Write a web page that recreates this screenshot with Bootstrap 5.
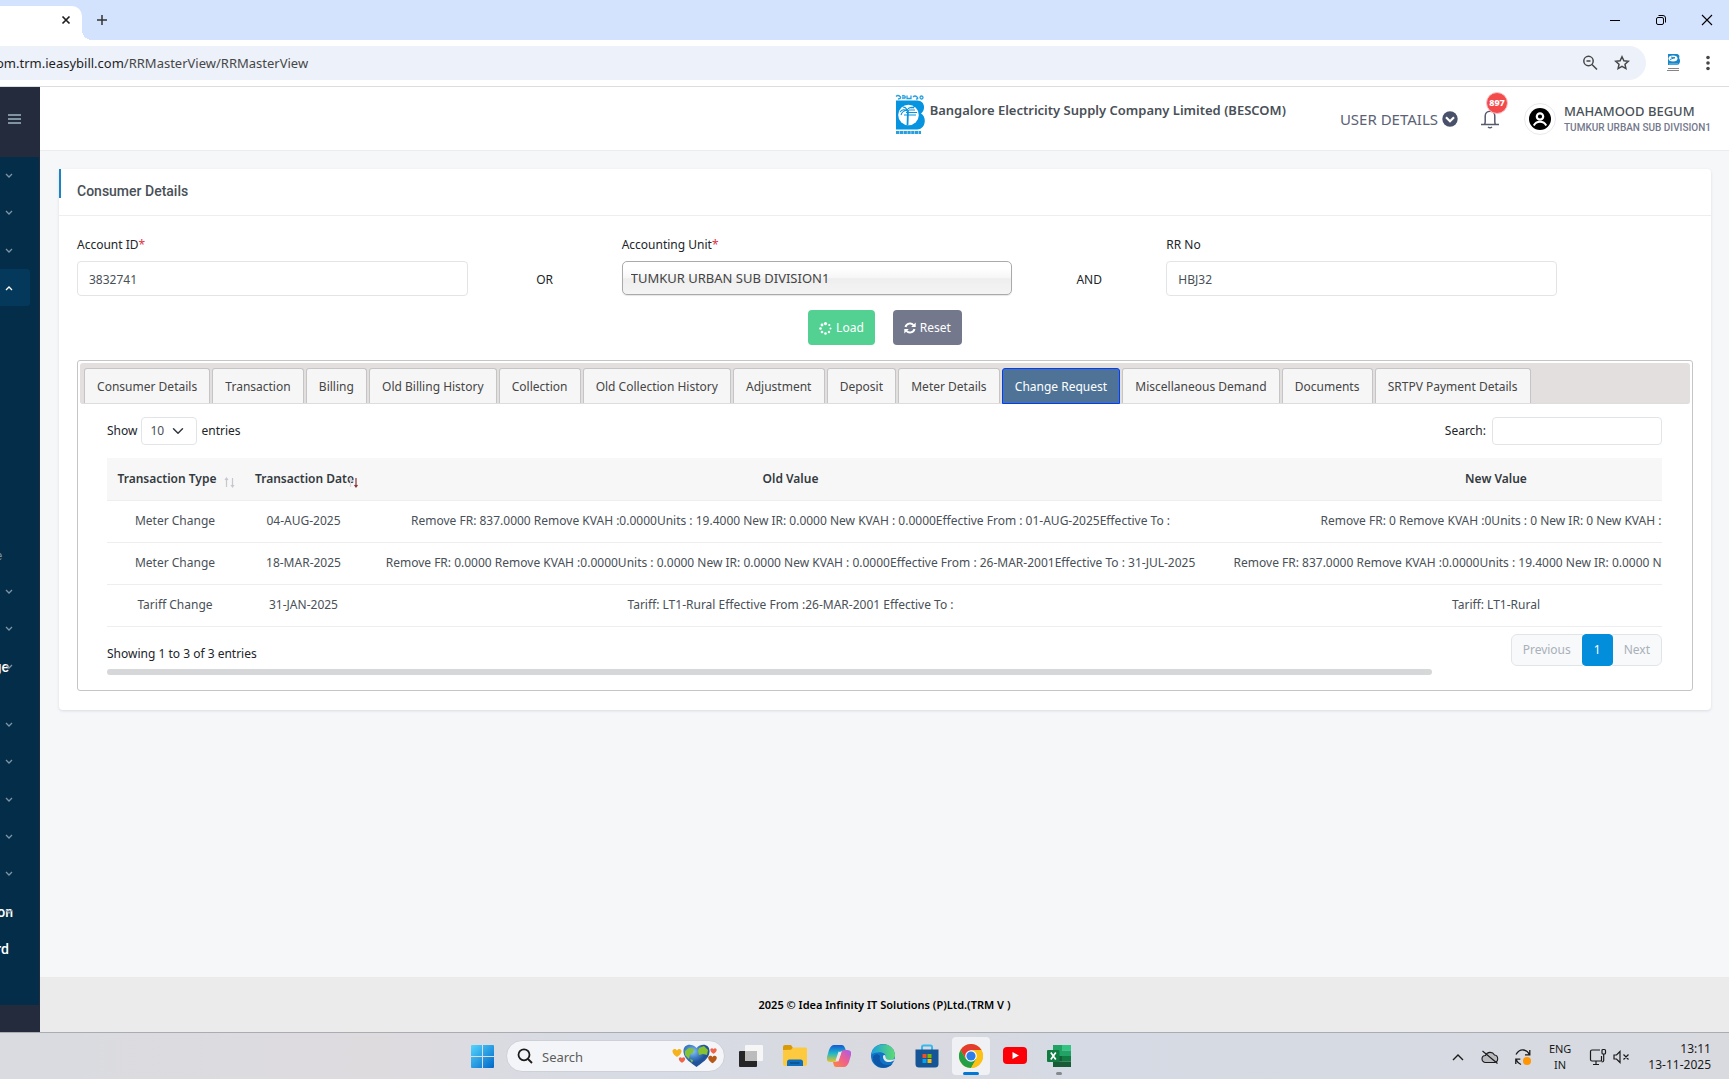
<!DOCTYPE html>
<html lang="en">
<head>
<meta charset="utf-8">
<meta name="viewport" content="width=device-width, initial-scale=1">
<title>RR Master View</title>
<link href="https://cdn.jsdelivr.net/npm/bootstrap@5.3.0/dist/css/bootstrap.min.css" rel="stylesheet">
<style>
body{font-family:"Noto Sans","Open Sans",sans-serif;font-size:12px;line-height:18px;color:#212529;background:#f6f7f9;min-height:100vh;overflow:hidden}
svg{display:block;flex:none}
button{font-family:inherit}
.icon-btn{border:0;background:none;padding:0;display:block}
/* browser chrome */
.tabstrip{height:40px;background:#d3e3fd}
.tab-open{width:82px;height:34px;background:#fff;border-radius:0 10px 0 0;padding:0 10px 6px 0}
.tab-foot{width:10px;height:10px;background:radial-gradient(circle at 100% 0,transparent 10px,#fff 10px)}
.new-tab{margin:0 0 14px 4px}
.restore{margin:0 34px}
.toolbar{height:47px;background:#fff;border-bottom:1px solid #dcdddf}
.omnibox{height:34px;background:#edf1fa;border-radius:0 17px 17px 0;font-size:13px;color:#1f1f1f;overflow:hidden}
.omnibox .url{margin-left:-4px}
.omnibox .path{color:#474747}
.site-app{margin:0 24px 0 18px}
.menu-dots{margin-right:18px}
/* sidebar */
.side{width:40px;background:#232b3c;font-family:Roboto,sans-serif}
.side-top{height:70px;padding:26px 0 0 8px}
.side-menu{background:#032d49;width:39px;height:848px;overflow:hidden}
.side-menu ul{list-style:none;margin:0;padding:0}
.side-menu li{height:37px;width:30px;display:grid;grid-template-columns:13px;align-items:center;justify-items:end}
.side-menu li>*{grid-area:1/1}
.side-menu li:nth-child(3n){margin-top:1px}
.side-menu svg{color:#7f95a5}
.side-menu .current{background:#04395b;border-radius:0 3px 3px 0}
.side-menu .current svg{color:#fff;transform:rotate(180deg)}
.side-menu .tall{margin-bottom:21px}
.side-menu .tall,.side-menu .last{grid-template-columns:9px}
.side-menu .tall svg{margin-right:-4px}
.side-menu a{color:#fff;font-size:14px;font-weight:500;text-decoration:none}
.side-menu .sub{height:267px;padding-top:241px;font-size:12px;color:#7f95a5;width:2px;display:flex;justify-content:flex-end}
/* header */
.top{height:64px;background:#fff;border-bottom:1px solid #ebecee;padding-right:18px}
.brand{margin-bottom:8px}
.company{font-size:13px;font-weight:600;color:#495057;margin:0 54px 18px 4px}
.userlink{font-size:15px;color:#5b6275;text-decoration:none}
.bell{position:relative;margin:0 25px 0 23px}
.count{position:absolute;left:5px;top:-17px;width:22px;height:22px;border-radius:11px;background:#f34b4b;border:1px solid #fbc4c4;color:#fff;font-size:9px;font-weight:800;line-height:20px;text-align:center}
.avatar{width:32px;height:32px;border:1px solid #e9eaee;border-radius:16px}
.who{margin:2px 0 0 8px;line-height:17px}
.who b{display:block;font-weight:500;font-size:13px;color:#495057}
.who span{display:block;font-family:Roboto,sans-serif;font-size:10px;font-weight:500;color:#74788d;line-height:16px}
/* card */
.page{padding:18px 18px 0 19px}
.panel{background:#fff;border:0;border-radius:4px;box-shadow:0 1px 3px rgba(40,60,90,.14)}
.panel-head{height:47px;border-bottom:1px solid #eceef0;position:relative;padding:0 18px 2px}
.panel-head::before{content:"";position:absolute;left:0;top:0;width:2px;height:29px;background:#1c84c6}
.panel-head h1{font:500 14px/20px Roboto,sans-serif;color:#495057;margin:0}
.panel-body{padding:20px 18px 19px}
.fields{--bs-gutter-x:18px}
.fields label{display:block;margin-bottom:7px}
.field{height:35px;border:1px solid #e2e5e8;border-radius:4px;padding:2px 11px 0;font-size:12px;color:#495057;width:100%;background:#fff}
.unit{height:34px;border:1px solid #aaa;border-radius:5px;padding:0 8px;margin-bottom:1px;width:100%;font-size:13px;color:#444;appearance:none;background:linear-gradient(#fff 20%,#f6f6f6 50%,#eee 52%,#f4f4f4 100%);box-shadow:0 1px 1px rgba(0,0,0,.1)}
.joiner{padding-bottom:7px}
.acts{padding-top:14px;gap:18px}
.act{height:35px;border:0;border-radius:4px;font-size:12px;padding:1px 11px 0;color:#fff;gap:4px}
.act-load{background:#53d192}.act-reset{background:#74788d}
.tabbox{border:1px solid #c5c5c5;border-radius:3px;padding:2px;margin-top:15px}
.tabbar{background:#e3dfdf;border-radius:3px;padding:5px 4px 0;height:41px;border-bottom:1px solid #ddd}
.tabbar .nav-link{border:1px solid #c5c5c5;border-bottom:0;border-radius:3px 3px 0 0;background:#f6f6f6;color:#454545;padding:0;height:35px;line-height:36px;flex:1 1 auto;white-space:nowrap;text-align:center}
.tabbar .nav-link.active{background:#4e7397;border:1px solid #003eff;color:#fff;height:36px}
.tabitems{gap:2px;width:90.3%}
.tabcontent{padding:13px 28px 13px 27px}
.len{width:56px;height:28px;border:1px solid #e2e5e8;border-radius:4px;font-size:12px;color:#495057;margin:0 4px;padding:0 8px;background-color:#fff;background-position:right 12px center;background-size:12px}
.find{width:170px;height:28px;border:1px solid #e2e5e8;border-radius:4px;margin-left:6px}
.clip{overflow:hidden;margin-top:13px}
.grid-table{width:1668px;table-layout:fixed;margin:0;border-collapse:collapse;text-align:center;color:#495057}
.grid-table th,.grid-table td{height:42px;padding:0;border-bottom:1px solid #eceef0;vertical-align:middle;white-space:nowrap}
.grid-table th{background:#f7f7f7;font-weight:600;color:#343a40}
.c-type{width:136px}.c-date{width:121px}.c-old{width:853px}.c-new{width:558px}
.sortable{display:inline-flex;align-items:center}
.sortable svg{margin:8px -4px 0 8px}
.sortable.now svg{margin:8px -8px 0 -6px}
.pager-row{padding-top:7px}
.pager .page-link{font-size:12px;line-height:18px;padding:6px 11px;height:32px;border-color:#e2e5e8;background:#f8f9fb;color:#a9b0b8}
.pager .active .page-link{background:#038edc;border-color:#038edc;color:#fff;border-radius:4px}
.info{padding-top:11px}
.track{height:6px;margin-top:3px}
.thumb{height:6px;border-radius:3px;background:#d6d7d8;width:85.2%}
.foot{height:55px;background:#ebebeb;font-size:11px;font-weight:600;color:#000;text-align:center;line-height:56px}
/* taskbar */
.taskbar{height:47px;border-top:1px solid #a9adb2;background:linear-gradient(90deg,#d9dbe0 0,#dedbdf 22%,#d6dbe5 38%,#dad9df 52%,#d5dae4 62%,#d8dae0 100%)}
.apps{padding-left:463px}
.app{width:38px;height:38px;margin-right:6px;display:flex;align-items:center;justify-content:center;position:relative;border:0;background:none;padding:0;border-radius:4px}
.app.on{background:#f0f1f5}
.app.on::after,.app.run::after{content:"";position:absolute;bottom:0;left:11px;width:16px;height:3px;border-radius:2px;background:#0078d4}
.app.run::after{left:16px;width:6px;background:#85888c}
.find-win{width:219px;height:32px;border-radius:16px;background:#f4f5f8;border:1px solid #cdd0d7;padding:0 6px 0 10px;margin:0 7px 0 -1px}
.find-win input{border:0;background:none;outline:0;width:70px;font-size:13px;color:#5d5d5d;padding:2px 0 0;margin-left:9px;flex:1}
.find-win input::placeholder{color:#5d5d5d}
.tray{color:#1b1b1b;font-size:11px;line-height:16px;padding:1px 18px 0 0}
.tray-cloud{margin:0 15px 0 17px}
.tray-lang{margin:0 18px 0 17px}
.tray-vol{margin:0 18px 0 6px}
.tray-clock{font-size:12px}
</style>
</head>
<body class="d-flex flex-column">

<svg width="0" height="0" class="position-absolute" aria-hidden="true">
  <symbol id="chev" viewBox="0 0 8 6"><path d="M1 1l3 3 3-3" fill="none" stroke="currentColor" stroke-width="1.3"/></symbol>
</svg>

<div class="tabstrip d-flex align-items-end">
  <div class="tab-open d-flex align-items-center justify-content-end">
    <button class="icon-btn" aria-label="Close tab"><svg width="12" height="12" viewBox="0 0 12 12"><path d="M2.500 2.500l7 7M9.500 2.500l-7 7" stroke="#1f1f1f" stroke-width="1.700"/></svg></button>
  </div>
  <div class="tab-foot"></div>
  <button class="icon-btn new-tab" aria-label="New tab"><svg width="12" height="12" viewBox="0 0 12 12"><path d="M6 1v10M1 6h10" stroke="#333" stroke-width="1.500"/></svg></button>
  <div class="ms-auto d-flex align-items-center align-self-center">
    <button class="icon-btn" aria-label="Minimise"><svg width="12" height="12" viewBox="0 0 12 12"><path d="M1 6.500h10" stroke="#000"/></svg></button>
    <button class="icon-btn restore" aria-label="Restore"><svg width="12" height="12" viewBox="0 0 12 12" fill="none" stroke="#000"><rect x="1.500" y="3.500" width="7" height="7" rx="1.500"/><path d="M3.500 1.500h4.500a2.500 2.500 0 0 1 2.500 2.500v4.500"/></svg></button>
    <button class="icon-btn me-3" aria-label="Close"><svg width="12" height="12" viewBox="0 0 12 12"><path d="M1 1l10 10M11 1l-10 10" stroke="#000" stroke-width="1.100"/></svg></button>
  </div>
</div>

<div class="toolbar d-flex align-items-center">
  <div class="omnibox d-flex align-items-center flex-grow-1">
    <div class="url text-nowrap">om.trm.ieasybill.com<span class="path">/RRMasterView/RRMasterView</span></div>
    <div class="ms-auto d-flex align-items-center pe-3">
      <svg width="16" height="16" viewBox="0 0 16 16" fill="none" stroke="#474747" stroke-width="1.500"><circle cx="6.500" cy="6" r="4.700"/><path d="M10 9.500l5 5M4.500 6h4"/></svg>
      <svg class="ms-3" width="16" height="16" viewBox="0 0 16 16" fill="none" stroke="#474747" stroke-width="1.500"><path d="M8 1.800l1.900 4 4.400.500-3.300 3 .9 4.300L8 11.400l-3.900 2.200.9-4.300-3.300-3 4.400-.500z"/></svg>
    </div>
  </div>
  <svg class="site-app" width="17" height="20" viewBox="0 0 17 20"><path d="M4 1h8c3 0 4 2 3 4 2 2 1 7-2 7H4z" fill="#1787c9"/><ellipse cx="9" cy="5.500" rx="4.500" ry="3" fill="#fff"/><path d="M6 6.500l5-2M7 4l4 1" stroke="#1787c9"/><path d="M5 11h9" stroke="#8cc4e6"/><path d="M4 15.500h11M3 17.500h12" stroke="#777" stroke-width=".9"/></svg>
  <button class="icon-btn menu-dots" aria-label="Menu"><svg width="6" height="16" viewBox="0 0 6 16" fill="#474747"><circle cx="3" cy="2.500" r="1.800"/><circle cx="3" cy="8" r="1.800"/><circle cx="3" cy="13.500" r="1.800"/></svg></button>
</div>

<div class="d-flex flex-grow-1">
  <nav class="side flex-shrink-0">
    <div class="side-top"><button class="icon-btn" aria-label="Toggle menu"><svg width="13" height="12" viewBox="0 0 13 12"><path d="M0 2h13M0 6h13M0 10h13" stroke="#7f93a3" stroke-width="1.800"/></svg></button></div>
    <div class="side-menu">
      <ul id="menuA"></ul>
      <div class="sub">e</div>
      <ul id="menuB"></ul>
    </div>
  </nav>

  <div class="d-flex flex-column flex-grow-1 overflow-hidden">
    <header class="top d-flex align-items-center justify-content-end">
      <svg class="brand" width="31" height="42" viewBox="0 0 31 42">
        <path d="M1 2.500q2-2 4 0t-2 2.500M7 2q4-1 3 2H7M12 1.500v3h4v-3M18 3q2-2 4 0t-1 2M25 3.500a1.500 1.500 0 1 0 3 0a1.500 1.500 0 1 0-3 0" fill="none" stroke="#26a0e0" stroke-width="1.300"/>
        <path d="M1 6.500h21c8 0 9 9 4 13 6 3 5 16-4 16H1z" fill="#0693df"/>
        <circle cx="13.500" cy="21" r="10.300" fill="#fff"/>
        <path d="M12.500 31l.5-15" stroke="#0693df" stroke-width="1.800"/>
        <path d="M12 17q-4-3-7 1M12 16q-5 1-6 5M12 16q3-4 7-2M12 16q-1-3-4-3M9 21h12M11 18.500h11M16 14l5-2M14 16l6 0" fill="none" stroke="#0693df" stroke-width="1.100"/>
        <path d="M1 38.500h25" stroke="#26a0e0" stroke-width="3.200" stroke-dasharray="3.300 .5"/>
      </svg>
      <div class="company text-nowrap">Bangalore Electricity Supply Company Limited (BESCOM)</div>
      <a href="#" class="userlink d-flex align-items-center text-nowrap">USER DETAILS
        <svg class="ms-1" width="16" height="16" viewBox="0 0 16 16"><circle cx="8" cy="8" r="7.700" fill="#495069"/><path d="M4 6.200l4 4 4-4" fill="none" stroke="#fff" stroke-width="2.200"/></svg></a>
      <button class="icon-btn bell" aria-label="Notifications">
        <svg width="18" height="20" viewBox="0 0 18 20" fill="none" stroke="#555b6d" stroke-width="1.500"><path d="M0 15.500h18M3.500 15.500q.7-1 .7-3V7a4.800 4.800 0 0 1 9.600 0v5.500q0 2 .7 3M7 18q2 1.500 4 0"/></svg>
        <span class="count">897</span></button>
      <div class="avatar d-flex align-items-center justify-content-center">
        <svg width="22" height="22" viewBox="0 0 22 22"><circle cx="11" cy="11" r="11" fill="#000"/><circle cx="11" cy="8.500" r="3.200" fill="none" stroke="#fff" stroke-width="2.200"/><path d="M4.800 17.500c1.500-3 3.500-3.800 6.200-3.800s4.700.8 6.200 3.800" fill="none" stroke="#fff" stroke-width="2"/></svg>
      </div>
      <div class="who text-nowrap"><b>MAHAMOOD BEGUM</b><span>TUMKUR URBAN SUB DIVISION1</span></div>
    </header>

    <main class="page flex-grow-1">
      <section class="card panel">
        <div class="panel-head d-flex align-items-center"><h1>Consumer Details</h1></div>
        <div class="panel-body">
          <form>
            <div class="row fields align-items-end">
              <div class="col-3"><label for="acc">Account ID<span class="text-danger">*</span></label><input id="acc" class="field d-block" value="3832741"></div>
              <div class="col-1 text-center joiner">OR</div>
              <div class="col-3"><label for="unit">Accounting Unit<span class="text-danger">*</span></label><select id="unit" class="unit d-block"><option>TUMKUR URBAN SUB DIVISION1</option></select></div>
              <div class="col-1 text-center joiner">AND</div>
              <div class="col-3"><label for="rr">RR No</label><input id="rr" class="field d-block" value="HBJ32"></div>
            </div>
            <div class="acts d-flex justify-content-center">
              <button type="button" class="act act-load d-flex align-items-center"><svg width="13" height="13" viewBox="0 0 13 13" fill="#fff"><circle cx="6.500" cy="1.600" r="1.600"/><circle cx="10.300" cy="3" r="1.100"/><circle cx="11.500" cy="6.500" r="1"/><circle cx="10" cy="10" r="1.200"/><circle cx="6.500" cy="11.500" r="1.300"/><circle cx="3" cy="10" r="1.300"/><circle cx="1.500" cy="6.500" r="1.300"/><circle cx="3" cy="3" r="1.400"/></svg>Load</button>
              <button type="button" class="act act-reset d-flex align-items-center"><svg width="12" height="12" viewBox="0 0 12 12"><path d="M1.500 5a4.600 4.600 0 0 1 8-1.800M10.500 7a4.600 4.600 0 0 1-8 1.800" fill="none" stroke="#fff" stroke-width="2"/><path d="M11.700.5v4.500H7.200zM.3 11.500V7h4.500z" fill="#fff"/></svg>Reset</button>
            </div>
          </form>

          <div class="tabbox">
            <div class="tabbar">
              <nav class="nav flex-nowrap tabitems">
                <a class="nav-link" href="#">Consumer Details</a><a class="nav-link" href="#">Transaction</a><a class="nav-link" href="#">Billing</a><a class="nav-link" href="#">Old Billing History</a><a class="nav-link" href="#">Collection</a><a class="nav-link" href="#">Old Collection History</a><a class="nav-link" href="#">Adjustment</a><a class="nav-link" href="#">Deposit</a><a class="nav-link" href="#">Meter Details</a><a class="nav-link active" href="#">Change Request</a><a class="nav-link" href="#">Miscellaneous Demand</a><a class="nav-link" href="#">Documents</a><a class="nav-link" href="#">SRTPV Payment Details</a>
              </nav>
            </div>
            <div class="tabcontent">
              <div class="d-flex justify-content-between">
                <div class="d-flex align-items-center"><label for="len">Show</label><select id="len" class="form-select len"><option>10</option></select><span>entries</span></div>
                <div class="d-flex align-items-center"><label for="find">Search:</label><input id="find" type="search" class="find"></div>
              </div>
              <div class="clip">
                <table class="grid-table">
                  <thead><tr>
                    <th class="c-type"><span class="sortable">Transaction Type<svg width="12" height="11" viewBox="0 0 12 11" fill="none" stroke="#c6c8cf" stroke-width="1.200"><path d="M2.500 10V1M1 3l1.500-2L4 3M8.500 1v9M7 8l1.500 2L10 8"/></svg></span></th>
                    <th class="c-date"><span class="sortable now">Transaction Date<svg width="12" height="11" viewBox="0 0 12 11" fill="none" stroke-width="1.200"><path d="M2.500 10V1M1 3l1.500-2L4 3" stroke="#d5d7dc"/><path d="M8 1v9M6.500 8L8 10l1.500-2" stroke="#8a3038"/></svg></span></th>
                    <th class="c-old">Old Value</th><th class="c-new">New Value</th>
                  </tr></thead>
                  <tbody>
                    <tr><td>Meter Change</td><td>04-AUG-2025</td><td>Remove FR: 837.0000 Remove KVAH :0.0000Units : 19.4000 New IR: 0.0000 New KVAH : 0.0000Effective From : 01-AUG-2025Effective To :</td><td>Remove FR: 0 Remove KVAH :0Units : 0 New IR: 0 New KVAH : 0</td></tr>
                    <tr><td>Meter Change</td><td>18-MAR-2025</td><td>Remove FR: 0.0000 Remove KVAH :0.0000Units : 0.0000 New IR: 0.0000 New KVAH : 0.0000Effective From : 26-MAR-2001Effective To : 31-JUL-2025</td><td>Remove FR: 837.0000 Remove KVAH :0.0000Units : 19.4000 New IR: 0.0000 New KVAH : 0.0000</td></tr>
                    <tr><td>Tariff Change</td><td>31-JAN-2025</td><td>Tariff: LT1-Rural Effective From :26-MAR-2001 Effective To :</td><td>Tariff: LT1-Rural</td></tr>
                  </tbody>
                </table>
              </div>
              <div class="pager-row d-flex justify-content-between">
                <div class="info">Showing 1 to 3 of 3 entries</div>
                <ul class="pagination pager mb-0">
                  <li class="page-item"><a class="page-link" href="#">Previous</a></li>
                  <li class="page-item active"><a class="page-link" href="#">1</a></li>
                  <li class="page-item"><a class="page-link" href="#">Next</a></li>
                </ul>
              </div>
              <div class="track"><div class="thumb"></div></div>
            </div>
          </div>
        </div>
      </section>
    </main>
    <footer class="foot">2025 © Idea Infinity IT Solutions (P)Ltd.(TRM V )</footer>
  </div>
</div>

<div class="taskbar d-flex align-items-center">
  <div class="apps d-flex align-items-center">
    <button class="app" aria-label="Start"><svg width="23" height="23" viewBox="0 0 23 23"><defs><linearGradient id="w" x1="0" y1="0" x2="1" y2="1"><stop stop-color="#55d5fd"/><stop offset="1" stop-color="#0068c8"/></linearGradient></defs><rect width="23" height="23" rx="1" fill="url(#w)"/><path d="M11.500 0v23M0 11.500h23" stroke="#dcdde2" stroke-width="1"/></svg></button>
    <div class="find-win d-flex align-items-center">
      <svg width="16" height="16" viewBox="0 0 16 16" fill="none" stroke="#1b1b1b" stroke-width="1.800"><circle cx="7" cy="6.800" r="5.500"/><path d="M11 11l4 4"/></svg>
      <input type="search" placeholder="Search" aria-label="Search">
      <svg width="46" height="24" viewBox="0 0 46 24"><defs><path id="h" d="M0-2.500C-1-5-5-4.500-4.500-1.200-4 1.500-1.500 3 0 4 1.500 3 4 1.500 4.500-1.200 5-4.500 1-5 0-2.500z"/><radialGradient id="g" cx=".35" cy=".3"><stop stop-color="#8cc8f5"/><stop offset=".6" stop-color="#3d7cc4"/><stop offset="1" stop-color="#20539a"/></radialGradient></defs>
        <use href="#h" transform="translate(5 9)" fill="#f5b21a"/><use href="#h" transform="translate(10 16) scale(.7)" fill="#f2644a"/>
        <path d="M24.500 4C20-1 11-.5 11.500 8c.5 7 8 11 13 15 5-4 12.500-8 13-15C38-.5 29-1 24.500 4z" fill="url(#g)"/>
        <path d="M13 7l4-3 5 1-1 4-3 1-1 5-4-4zM27 4l5-2 4 4-1 5-4-1-4 1-1-4zM18 15l3 1-1 3z" fill="#86c232"/>
        <use href="#h" transform="translate(41.500 7) scale(.7)" fill="#f2644a"/><use href="#h" transform="translate(40.500 15.500) scale(.95)" fill="#b4591a"/></svg>
    </div>
    <button class="app" aria-label="Task view"><svg width="24" height="24" viewBox="0 0 24 24"><rect x="0" y="7" width="18" height="16" rx="1" fill="#262626"/><rect x="6" y="1" width="18" height="16" rx="1" fill="#f6f6f6"/><path d="M6 7h12v10H6z" fill="#bcbcbc"/></svg></button>
    <button class="app" aria-label="File Explorer"><svg width="24" height="24" viewBox="0 0 24 24"><path d="M0 3q0-2 2-2h6l2 3v6H0z" fill="#d99a08"/><path d="M0 6l8-.3 2-2.200h13q1 0 1 1.500V20q0 2-2 2H2q-2 0-2-2z" fill="#fdc93f"/><path d="M4 22v-4q0-2.500 2.500-2.500h11Q20 15.500 20 18v4z" fill="#0f6fbf"/><path d="M7 19h9.500" stroke="#0a4e8c" stroke-width="1.500"/></svg></button>
    <button class="app" aria-label="Copilot"><svg width="24" height="22" viewBox="0 0 24 22"><defs><linearGradient id="c1" x1="0" y1="0" x2="0" y2="1"><stop stop-color="#1558d6"/><stop offset=".5" stop-color="#20b8c8"/><stop offset="1" stop-color="#e8c42a"/></linearGradient><linearGradient id="c2" x1="1" y1="0" x2="0" y2="1"><stop stop-color="#a45bf0"/><stop offset=".5" stop-color="#f0608a"/><stop offset="1" stop-color="#fb8a3c"/></linearGradient></defs><path d="M7 0h8q2 0 3 3l1 3h-4q-2 0-3 3l-2 6q-1 2-3 2H3q-4 0-3-5l2-7q2-5 5-5z" fill="url(#c1)"/><path d="M17 22H9q-2 0-2.500-3L6 17h2q3 0 4-3l2-6q1-3 3-3h3q5 0 4 5l-2 7q-2 5-5 5z" fill="url(#c2)"/><path d="M13 7l-3 9" stroke="#e9e6ec" stroke-width="3"/></svg></button>
    <button class="app" aria-label="Edge"><svg width="24" height="24" viewBox="0 0 24 24"><defs><linearGradient id="e1"><stop stop-color="#1a9fe0"/><stop offset="1" stop-color="#5fdc70"/></linearGradient></defs><circle cx="12" cy="12" r="12" fill="#1173c8"/><path d="M.3 10.500C2-2.500 22-3.500 24 10.500c.4 4-3 6-6 6-4 0-5-1.800-3.500-3.500C16 9 8 6 .3 10.500z" fill="url(#e1)"/><path d="M9 12c-2 7 5 11 12.500 8C15 27 1 24 2 13c1-3 5-4 7-1z" fill="#0d57a8"/><path d="M23.500 16c-5 4-12 2-11.500-4 1-2 3-1 2.500 1 0 3 4 4 9 2z" fill="#e4e8ee"/></svg></button>
    <button class="app" aria-label="Store"><svg width="24" height="24" viewBox="0 0 24 24"><path d="M7 6V3q0-1.500 1.500-1.500h7Q17 1.500 17 3v3" fill="none" stroke="#35b9ee" stroke-width="2"/><path d="M.5 5.500h23V20q0 3.500-3.500 3.500H4Q.5 23.500.5 20z" fill="#155596"/><path d="M7.500 10h4v4h-4z" fill="#f25022"/><path d="M12.500 10h4v4h-4z" fill="#7fba00"/><path d="M7.500 15h4v4h-4z" fill="#00a4ef"/><path d="M12.500 15h4v4h-4z" fill="#ffb900"/></svg></button>
    <button class="app on" aria-label="Chrome"><svg width="24" height="24" viewBox="0 0 24 24"><circle cx="12" cy="12" r="12" fill="#fbc116"/><path d="M12 6h10.400A12 12 0 0 0 1.600 6l5.200 9z" fill="#e33b2e"/><path d="M1.600 6A12 12 0 0 0 12 24l5.200-9L12 12 6.800 15z" fill="#23a047"/><path d="M12 24a12 12 0 0 0 10.400-18H12l5.200 9z" fill="#fbc116"/><circle cx="12" cy="12" r="5.800" fill="#fff"/><circle cx="12" cy="12" r="4.600" fill="#2f7de9"/></svg></button>
    <button class="app" aria-label="YouTube"><svg width="24" height="18" viewBox="0 0 24 18"><rect width="24" height="17" rx="4" fill="#fb0007"/><path d="M9.500 5l6.500 3.500L9.500 12z" fill="#fff"/></svg></button>
    <button class="app run" aria-label="Excel"><svg width="24" height="22" viewBox="0 0 24 22"><path d="M6 0h9v11H6z" fill="#21a366"/><path d="M15 0h9v5.500h-9z" fill="#33c481"/><path d="M15 5.500h9V11h-9z" fill="#21a366"/><path d="M6 11h9v5.500H6z" fill="#185c37"/><path d="M15 11h9v5.500h-9z" fill="#107c41"/><path d="M6 16.500h18V22H6z" fill="#185c37"/><rect y="5" width="12.500" height="12" rx="1" fill="#107c41"/><path d="M3.800 7.500l5 7M8.800 7.500l-5 7" stroke="#fff" stroke-width="1.700"/></svg></button>
  </div>
  <div class="tray d-flex align-items-center ms-auto">
    <svg width="12" height="8" viewBox="0 0 12 8"><path d="M1 7l5-5 5 5" fill="none" stroke="#1b1b1b" stroke-width="1.400"/></svg>
    <svg class="tray-cloud" width="18" height="14" viewBox="0 0 18 14" fill="none" stroke="#1b1b1b" stroke-width="1.100"><path d="M4.500 12.500a3.500 3.500 0 0 1 0-7 5 5 0 0 1 9-.5 3.800 3.800 0 0 1 0 7.500z" fill="#b9babd"/><path d="M1.500 1l15 12.500"/></svg>
    <svg width="18" height="18" viewBox="0 0 18 18" fill="none" stroke="#1b1b1b" stroke-width="1.300"><path d="M2 6.500Q5 1.500 9.500 2q4 .5 6 4.500M15.800 2v4.800H11M1.800 16v-4.800h4.500M2 11.500q1.500 3.500 5 5"/><circle cx="13" cy="13" r="4" fill="#ff9500" stroke="none"/></svg>
    <div class="tray-lang text-center">ENG<br>IN</div>
    <svg width="18" height="18" viewBox="0 0 18 18" fill="none" stroke="#1b1b1b" stroke-width="1.200"><path d="M11 2H3Q1.500 2 1.500 3.500v8Q1.500 13 3 13h9.500V8M7 13v3.500M4 16.500h6"/><rect x="13" y="1.500" width="3.500" height="4.500" rx="1"/><path d="M14.700 6v6.500q0 1.500-2 1.500"/></svg>
    <svg class="tray-vol" width="17" height="14" viewBox="0 0 17 14" fill="none" stroke="#1b1b1b" stroke-width="1.200"><path d="M1 5v4h2.500L7 12.500v-11L3.500 5zM10.500 4.500l5 5M15.500 4.500l-5 5"/></svg>
    <div class="tray-clock text-end">13:11<br>13-11-2025</div>
  </div>
</div>

<script src="https://cdn.jsdelivr.net/npm/bootstrap@5.3.0/dist/js/bootstrap.bundle.min.js"></script>
<script>
// One sidebar entry: the visible end of its label, its class, and whether it has an arrow.
const item = (label = '', cls = '', arrow = true) =>
  `<li class="${cls}"><a href="#">${label}</a>${arrow ? '<svg width="8" height="6"><use href="#chev"/></svg>' : ''}</li>`;
document.getElementById('menuA').innerHTML = item() + item() + item() + item('', 'current');
document.getElementById('menuB').innerHTML = item() + item() + item('ge', 'tall') +
  item().repeat(5) + item('on') + item('rd', 'last', false);
</script>
</body>
</html>
